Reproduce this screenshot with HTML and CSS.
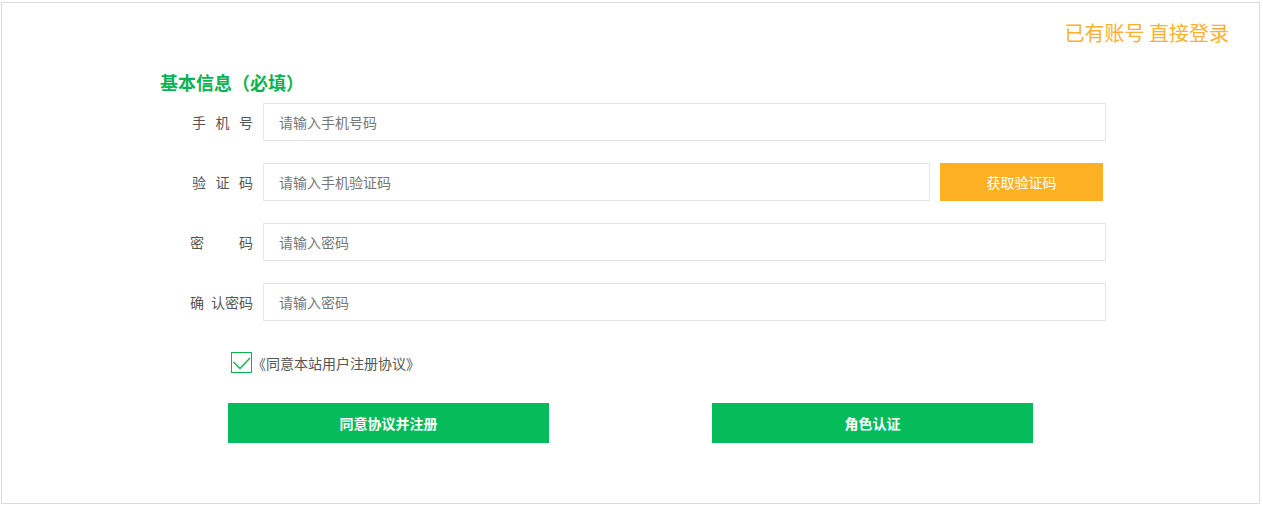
FILE: index.html
```html
<!DOCTYPE html>
<html>
	<head>
		<meta charset="utf-8" />
		<title>注册</title>
		<link rel="stylesheet" href="styles.css">
	</head>
	<body>
		<div class="reg">
			<div class="login-link"><a href="#">已有账号 直接登录</a></div>
			<div class="form">
				<h2>基本信息（必填）</h2>
				<div class="row">
					<label class="three"><span>手</span><span>机</span><span>号</span></label>
					<input type="text" class="ipt" placeholder="请输入手机号码" />
				</div>
				<div class="row">
					<label class="three"><span>验</span><span>证</span><span>码</span></label>
					<input type="text" class="ipt ipt-short" placeholder="请输入手机验证码" />
					<button class="btn-code">获取验证码</button>
				</div>
				<div class="row">
					<label><span>密</span><span>码</span></label>
					<input type="password" class="ipt" placeholder="请输入密码" />
				</div>
				<div class="row">
					<label><span>确</span><span>认密码</span></label>
					<input type="password" class="ipt" placeholder="请输入密码" />
				</div>
				<div class="agree">
					<span class="check">
						<svg width="21" height="21" viewBox="0 0 21 21"><polyline points="2.5,10 9,16.5 19,6" fill="none" stroke="#09b54f" stroke-width="1.4" /></svg>
					</span>
					<span>《同意本站用户注册协议》</span>
				</div>
				<div class="btns">
					<button class="btn-green">同意协议并注册</button>
					<button class="btn-green">角色认证</button>
				</div>
			</div>
		</div>
	</body>
</html>
```

FILE: styles.css
```css
* {
	padding: 0;
	margin: 0;
	border: 0;
	box-sizing: border-box;
}

body {
	font-family: "Noto Sans CJK SC", "Liberation Sans", sans-serif;
	font-size: 14px;
	color: #555;
	background: #fff;
}

.reg {
	width: 1259px;
	height: 502px;
	margin: 2px 0 0 1px;
	border: 1px solid #dcdcdc;
}

.login-link {
	text-align: right;
	padding: 16px 30px 0 0;
	font-size: 20px;
	line-height: 28px;
}

.login-link a {
	color: #fbb030;
	text-decoration: none;
}

.form {
	margin: 23px 0 0 158px;
}

.form h2 {
	font-size: 18px;
	line-height: 24px;
	color: #0cb250;
	font-weight: bold;
	margin-bottom: 9px;
}

.row {
	display: flex;
	align-items: center;
	height: 38px;
	margin-bottom: 22px;
}

.row label {
	width: 93px;
	margin-right: 10px;
	padding-left: 30px;
	display: flex;
	justify-content: space-between;
	color: #555;
}

.row label.three {
	padding-left: 32px;
}

.ipt {
	width: 843px;
	height: 38px;
	border: 1px solid #e6e6e6;
	padding-left: 15px;
	font-family: inherit;
	font-size: 14px;
	color: #333;
	outline: none;
}

.ipt::placeholder {
	color: #777;
}

.ipt-short {
	width: 667px;
}

.btn-code {
	width: 163px;
	height: 38px;
	margin-left: 10px;
	background: #fdb023;
	color: #fff;
	font-family: inherit;
	font-size: 14px;
	cursor: pointer;
}

.agree {
	display: flex;
	align-items: center;
	margin: 31px 0 0 71px;
	font-size: 14px;
	color: #555;
}

.check {
	width: 21px;
	height: 21px;
	border: 1px solid #09b54f;
	display: flex;
}

.check svg {
	margin: -1px;
}

.btns {
	display: flex;
	margin: 30px 0 0 68px;
	gap: 163px;
}

.btn-green {
	width: 321px;
	height: 40px;
	background: #05bb5a;
	color: #fff;
	font-family: inherit;
	font-size: 14px;
	font-weight: bold;
	cursor: pointer;
}
```
